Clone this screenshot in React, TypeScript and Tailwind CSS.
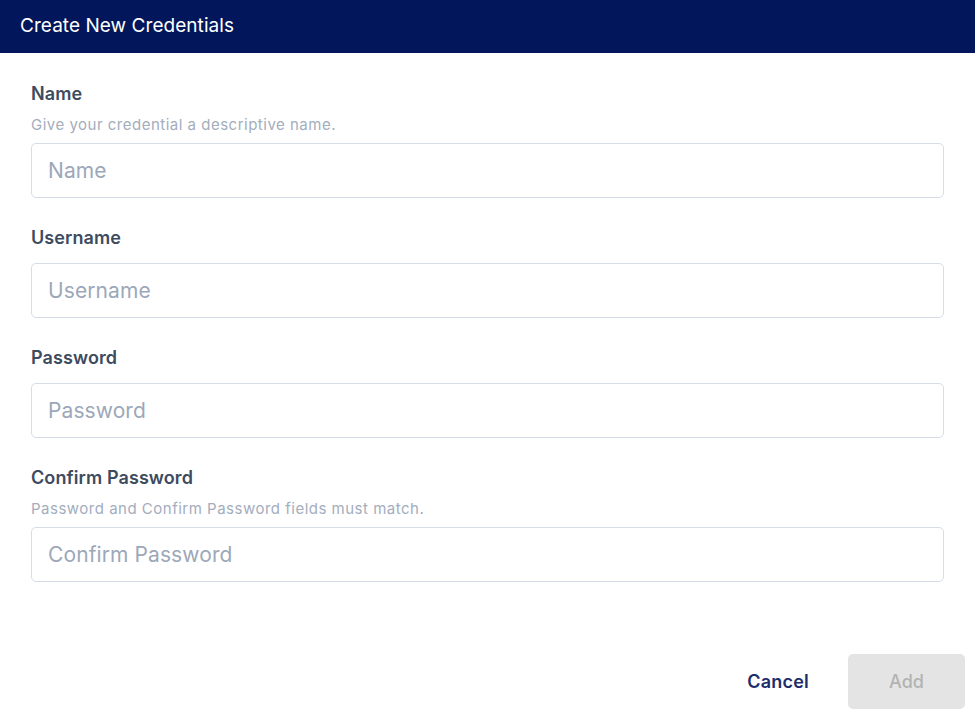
import React from "react";

type FieldProps = {
  label: string;
  hint?: string;
  placeholder: string;
  type?: string;
};

function Field({ label, hint, placeholder, type = "text" }: FieldProps) {
  return (
    <div className="flex flex-col">
      <label className="text-[18px] leading-6 font-semibold tracking-[0.1px] text-[#3d4b5f]">{label}</label>
      {hint ? (
        <p className="mt-[9px] mb-2 text-[15px] leading-5 tracking-[0.5px] text-[#a3adbd]">{hint}</p>
      ) : (
        <div className="h-[13px]" />
      )}
      <input
        type={type}
        placeholder={placeholder}
        className="h-[55px] w-full rounded-[5px] border border-[#d6dde8] bg-white px-[16px] text-[21px] tracking-[0.1px] text-[#3d4b5f] outline-none placeholder:text-[#9ca8b9]"
      />
    </div>
  );
}

export default function App() {
  return (
    <main
      className="flex h-[718px] w-[975px] flex-col bg-white"
      style={{ fontFamily: "Inter, 'Noto Sans', sans-serif" }}
    >
      <header className="flex h-[53px] items-center bg-[#02175b] px-5">
        <h1 className="text-[19px] tracking-[0.05px] text-white">Create New Credentials</h1>
      </header>
      <section className="flex flex-col gap-[28px] pt-[29px] pl-[31px] pr-[31px]">
        <Field label="Name" hint="Give your credential a descriptive name." placeholder="Name" />
        <Field label="Username" placeholder="Username" />
        <Field label="Password" placeholder="Password" type="password" />
        <Field
          label="Confirm Password"
          hint="Password and Confirm Password fields must match."
          placeholder="Confirm Password"
          type="password"
        />
      </section>
      <footer className="mt-auto mb-[9px] flex items-center justify-end gap-[39px] pr-[10px]">
        <button className="text-[18px] font-semibold tracking-[0.2px] text-[#1d2d6b]">Cancel</button>
        <button
          disabled
          className="h-[55px] w-[117px] rounded-[5px] bg-[#e4e4e4] text-[18px] font-medium text-[#b3b3b3]"
        >
          Add
        </button>
      </footer>
    </main>
  );
}
